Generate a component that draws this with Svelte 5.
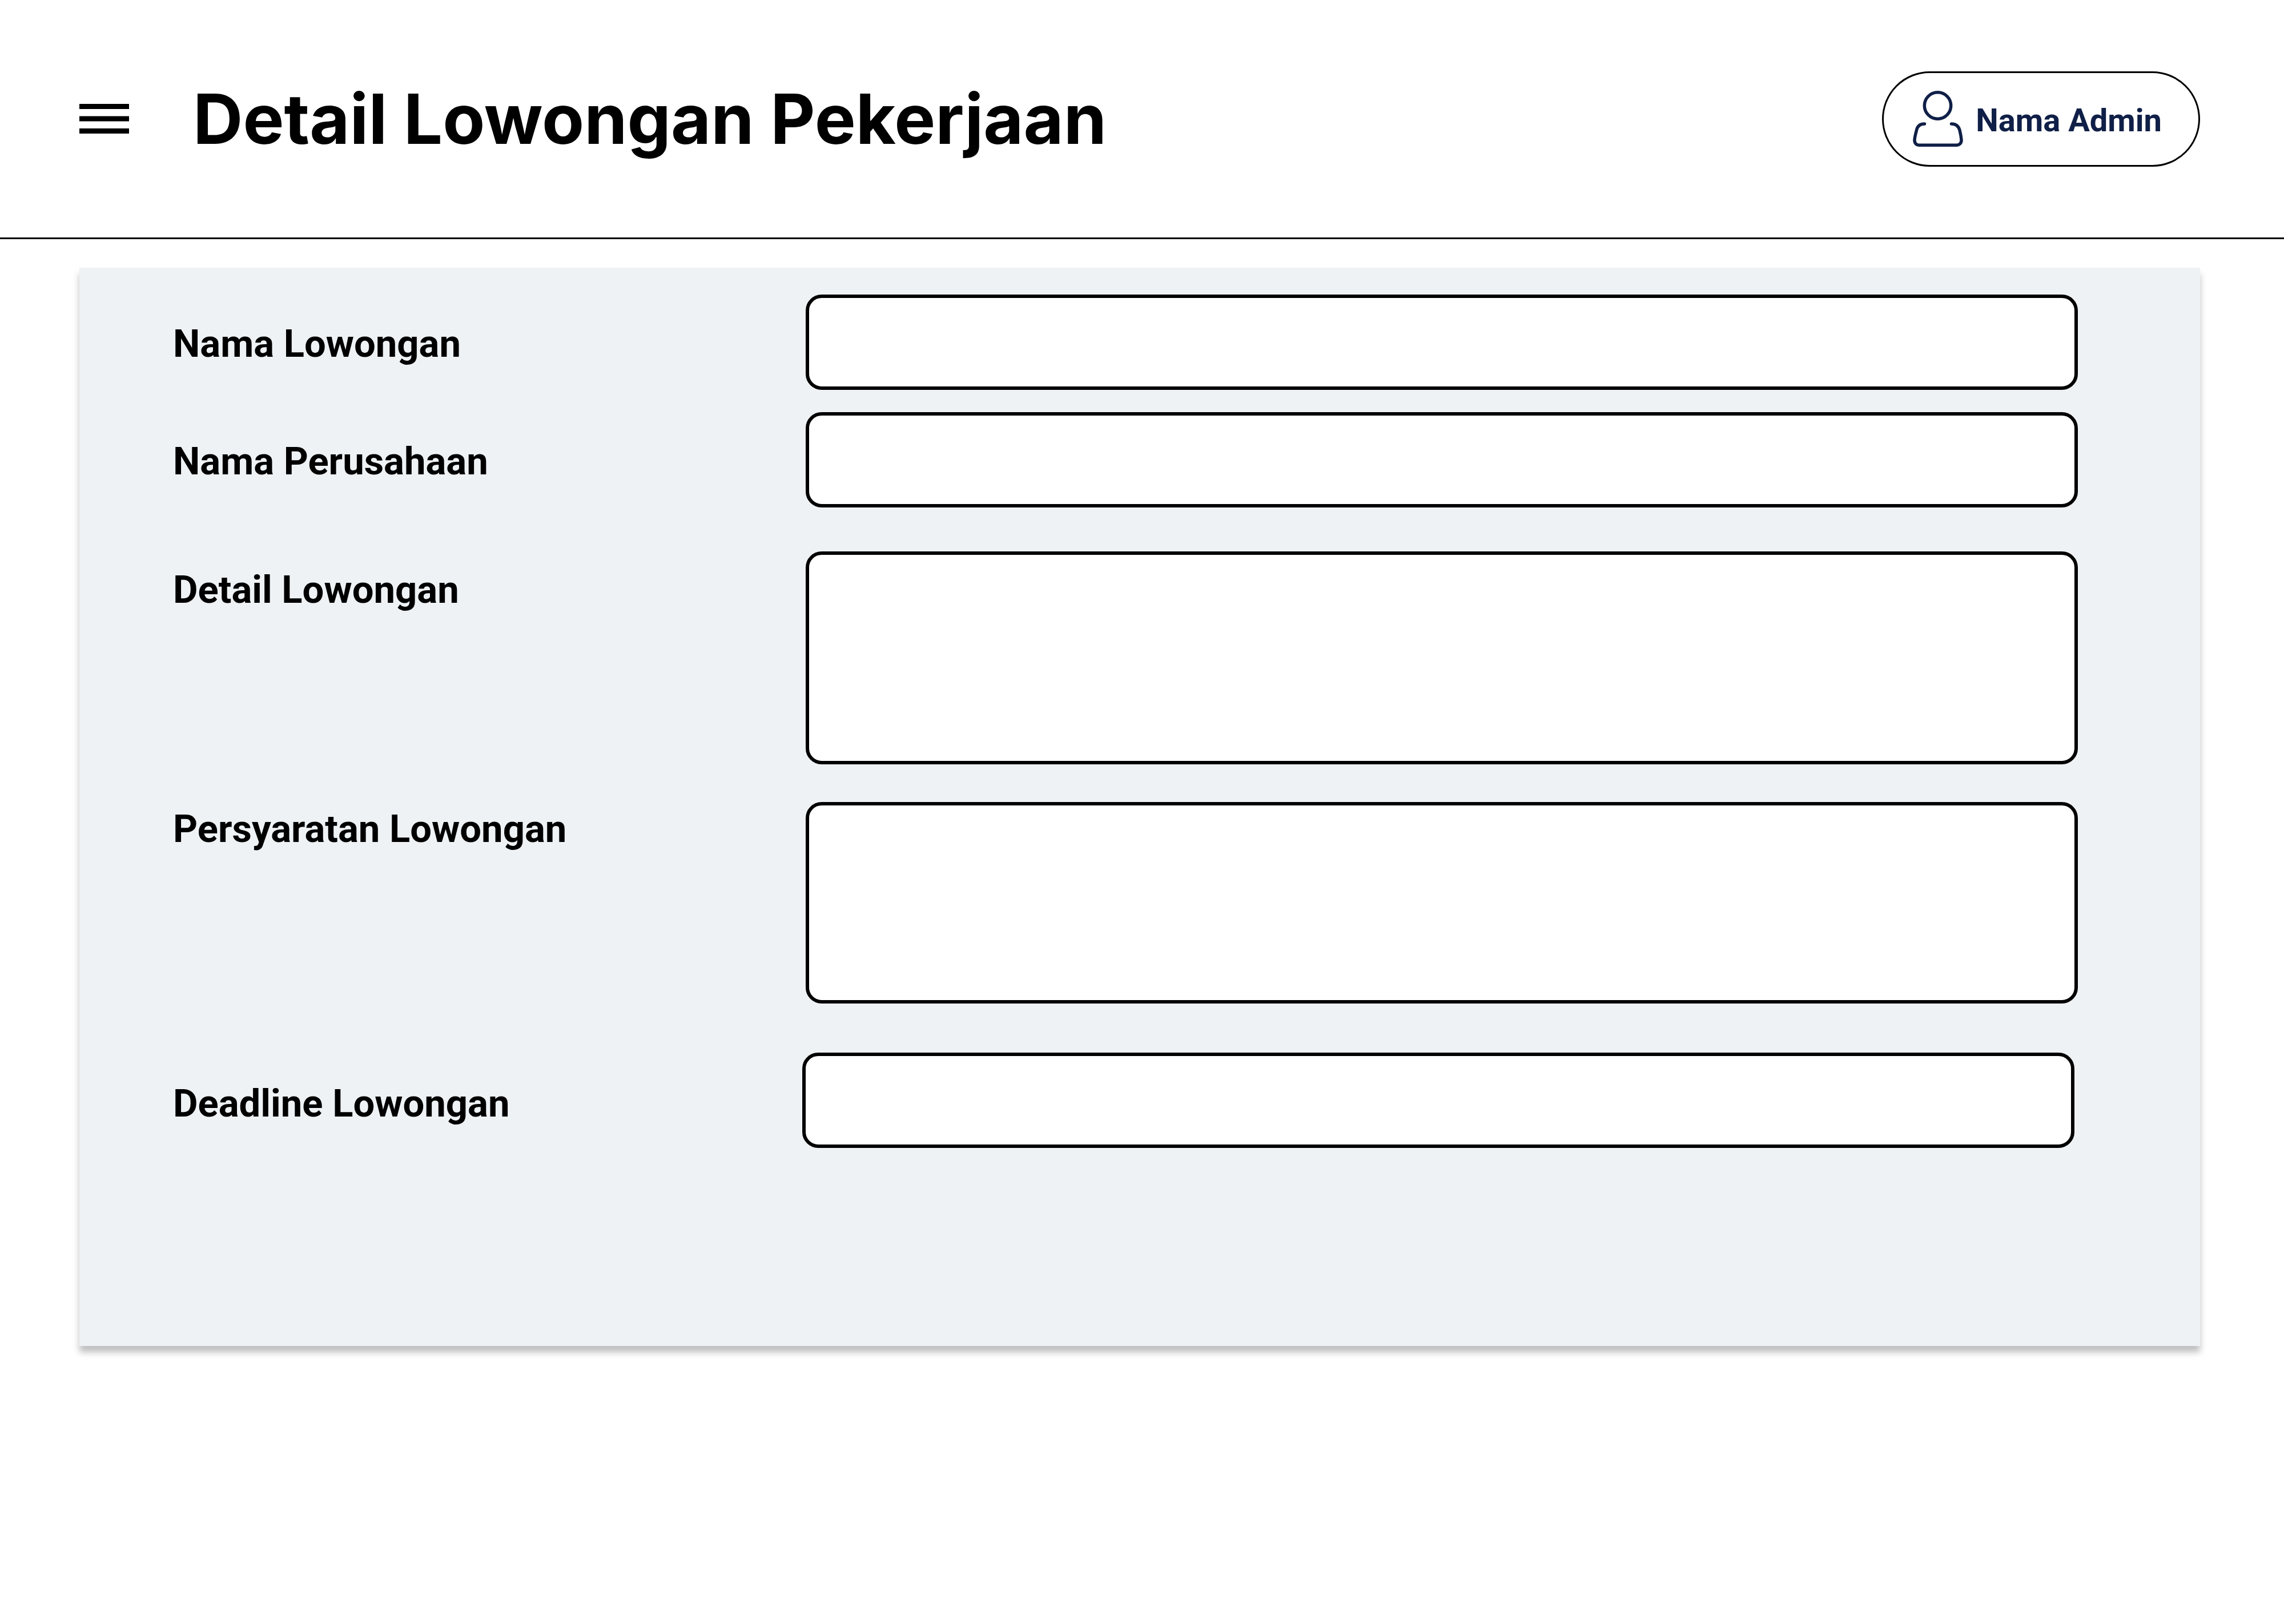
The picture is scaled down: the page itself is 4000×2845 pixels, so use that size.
<script>
  const fields = [
    { id: 'nama-lowongan', label: 'Nama Lowongan', kind: 'single' },
    { id: 'nama-perusahaan', label: 'Nama Perusahaan', kind: 'single' },
    { id: 'detail-lowongan', label: 'Detail Lowongan', kind: 'detail' },
    { id: 'persyaratan-lowongan', label: 'Persyaratan Lowongan', kind: 'requirements' },
    { id: 'deadline-lowongan', label: 'Deadline Lowongan', kind: 'deadline' }
  ];
</script>

<header class="topbar">
  <button class="menu" type="button" aria-label="Menu">
    <svg viewBox="0 0 87 52" aria-hidden="true">
      <path d="M0 0h87v9H0zM0 21.5h87v9H0zM0 43h87v9H0z" />
    </svg>
  </button>
  <h1>Detail Lowongan Pekerjaan</h1>
  <button class="profile" type="button">
    <svg viewBox="0 0 88 98" aria-hidden="true">
      <circle cx="43.5" cy="26" r="23.2" />
      <path d="M20.5 58C13 58 8 62 6.5 69C5 75 3.5 80 3 86C2.8 92 6 95.3 11.5 95.3H76C81.5 95.3 85.2 92 85 86C84.5 80 83.5 75 82 69C80 62 75 58 67.5 58" />
    </svg>
    <span>Nama Admin</span>
  </button>
</header>

<main>
  <form class="card">
    {#each fields as field (field.id)}
      <div class="row {field.kind}">
        <label for={field.id}>{field.label}</label>
        {#if field.kind === 'detail' || field.kind === 'requirements'}
          <textarea id={field.id}></textarea>
        {:else}
          <input id={field.id} type="text" />
        {/if}
      </div>
    {/each}
  </form>
</main>

<style>
  :global(body) {
    margin: 0;
    background: #fff;
    color: #000;
    font-family: Roboto, 'Liberation Sans', sans-serif;
  }

  .topbar {
    display: flex;
    align-items: center;
    height: 416px;
    padding: 0 147px 0 139px;
    border-bottom: 3px solid #000;
  }

  button {
    margin: 0;
    padding: 0;
    border: 0;
    background: none;
    font: inherit;
    cursor: pointer;
  }

  .menu {
    display: flex;
    flex: none;
  }

  .menu svg {
    width: 87px;
    height: 52px;
  }

  h1 {
    flex: 1;
    margin: 0 0 0 112px;
    font: 700 121px/136px Inter, 'Liberation Sans', sans-serif;
  }

  .profile {
    display: flex;
    flex: none;
    align-items: center;
    gap: 22px;
    box-sizing: border-box;
    height: 167px;
    padding: 0 64px 0 51px;
    border: 3px solid #000;
    border-radius: 84px;
    color: #0f1f47;
    font-size: 56px;
    font-weight: 700;
    line-height: 66px;
  }

  .profile svg {
    width: 88px;
    height: 98px;
    fill: none;
    stroke: currentColor;
    stroke-width: 5.5;
    stroke-linecap: round;
  }

  .profile span {
    padding-top: 6px;
  }

  main {
    padding: 50px 147px 140px 139px;
  }

  .card {
    display: flex;
    flex-direction: column;
    padding: 47px 214px 347px 164px;
    background: #eef2f4;
    box-shadow: 0 11px 11px rgba(0, 0, 0, 0.25);
  }

  .row {
    display: grid;
    grid-template-columns: 1108fr 2228fr;
    align-items: start;
  }

  .row + .single {
    margin-top: 39px;
  }

  .detail {
    margin-top: 77px;
  }

  .requirements {
    margin-top: 66px;
  }

  .deadline {
    grid-template-columns: 1102fr 2228fr 6fr;
    margin-top: 86px;
  }

  label {
    padding-top: 46px;
    font-size: 67px;
    font-weight: 700;
    line-height: 80px;
  }

  .detail label {
    padding-top: 27px;
  }

  .requirements label {
    padding-top: 7px;
  }

  .deadline label {
    padding-top: 49px;
  }

  input,
  textarea {
    display: block;
    box-sizing: border-box;
    width: 100%;
    height: 167px;
    margin: 0;
    padding: 0 40px;
    border: 6px solid #000;
    border-radius: 28px;
    background: #fff;
    color: inherit;
    font: 400 60px/80px Roboto, 'Liberation Sans', sans-serif;
  }

  textarea {
    padding: 30px 40px;
    resize: none;
  }

  .detail textarea {
    height: 373px;
  }

  .requirements textarea {
    height: 353px;
  }
</style>
